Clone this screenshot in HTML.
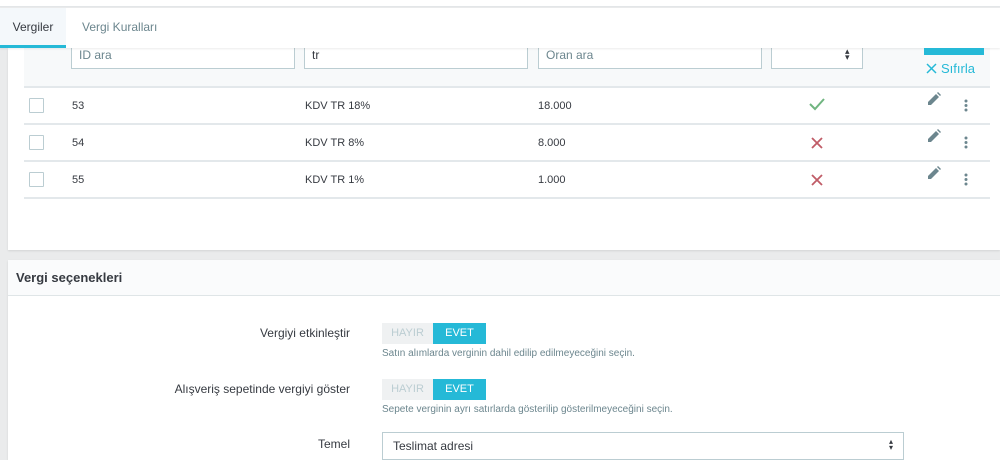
<!DOCTYPE html><html><head><style>
*{box-sizing:border-box;margin:0;padding:0}
body{width:1000px;height:460px;overflow:hidden;background:#eaebec;font-family:"Liberation Sans",sans-serif;color:#363a41;position:relative}
.abs{position:absolute}
.top{left:0;top:0;width:1000px;height:7px;background:#fff;border-bottom:1px solid #e3e6e8}
.tabs{left:0;top:8px;width:1000px;height:40px;background:#fff;box-shadow:0 1px 2px rgba(0,0,0,.08);z-index:2}
.tab{position:absolute;top:0;height:40px;line-height:38px;font-size:12px;color:#6c868e}
.card1{left:8px;top:48px;width:992px;height:202px;background:#fff;box-shadow:0 1px 2px rgba(0,0,0,.1)}
.filter{left:24px;top:48px;width:966px;height:40px;background:#f7f9fa;border-bottom:2px solid #e3e8eb}
.inp{position:absolute;top:48px;height:21px;border:1px solid #bbcdd2;border-top:none;background:#fff;font-size:12px;color:#6c868e;padding:0 7px;line-height:12px}
.row{left:24px;width:966px;height:37px;border-bottom:2px solid #e3e8eb;font-size:11px;color:#363a41}
.row span{position:absolute;top:12px}
.cb{position:absolute;left:5px;top:10px;width:15px;height:15px;border:1px solid #bbcdd2;border-radius:1px}
.card2{left:8px;top:260px;width:992px;height:200px;background:#fff;box-shadow:0 1px 2px rgba(0,0,0,.1)}
.hdr{left:8px;top:260px;width:992px;height:36px;background:#fafbfc;border-bottom:1px solid #dfe5e7;font-size:13px;font-weight:bold;color:#363a41;padding:11px 8px;line-height:14px}
.lbl{position:absolute;right:650px;font-size:12px;color:#363a41;text-align:right}
.sw{position:absolute;left:382px;width:104px;height:21px;font-size:11px}
.sw .n{position:absolute;left:0;top:0;width:51px;height:21px;background:#eff1f2;color:#bbcdd2;text-align:center;line-height:21px}
.sw .y{position:absolute;left:51px;top:0;width:53px;height:21px;background:#25b9d7;color:#fff;text-align:center;line-height:21px}
.help{position:absolute;left:382px;font-size:10px;color:#6c868e}
</style></head><body>
<div class="abs top"></div>
<div class="abs tabs">
<div class="tab" style="left:0;width:66px;background:#f4f8fb;color:#363a41;text-align:center;border-bottom:3px solid #25b9d7">Vergiler</div>
<div class="tab" style="left:82px">Vergi Kuralları</div>
</div>
<div class="abs card1"></div>
<div class="abs filter"></div>
<div class="inp" style="left:71px;width:224px;top:48px">&nbsp;</div>
<div class="abs" style="left:79px;top:48px;font-size:12px;color:#6c868e;z-index:3">ID ara</div>
<div class="inp" style="left:304px;width:224px"></div>
<div class="abs" style="left:312px;top:48px;font-size:12px;color:#363a41;z-index:3">tr</div>
<div class="inp" style="left:538px;width:224px"></div>
<div class="abs" style="left:546px;top:48px;font-size:12px;color:#6c868e;z-index:3">Oran ara</div>
<div class="inp" style="left:771px;width:92px"></div>
<div class="abs" style="left:845px;top:48px;font-size:9px;color:#363a41;z-index:3;line-height:6px">▴<br>▾</div>
<div class="abs" style="left:924px;top:48px;width:60px;height:7px;background:#25b9d7;z-index:3"></div>
<svg class="abs" style="left:926px;top:63px" width="11" height="11" viewBox="0 0 11 11"><path d="M1 1L10 10M10 1L1 10" stroke="#25b9d7" stroke-width="1.5"/></svg>
<div class="abs" style="left:941px;top:61px;font-size:13px;color:#25b9d7">Sıfırla</div>

<div class="abs row" style="top:88px"><div class="cb"></div><span style="left:48px">53</span><span style="left:281px">KDV TR 18%</span><span style="left:514px">18.000</span></div>
<div class="abs row" style="top:125px"><div class="cb"></div><span style="left:48px">54</span><span style="left:281px">KDV TR 8%</span><span style="left:514px">8.000</span></div>
<div class="abs row" style="top:162px"><div class="cb"></div><span style="left:48px">55</span><span style="left:281px">KDV TR 1%</span><span style="left:514px">1.000</span></div>
<svg class="abs" style="left:800px;top:90px" width="40" height="100" viewBox="0 0 40 100">
<path d="M10 14L15 19L24 9" stroke="#70b580" stroke-width="2" fill="none"/>
<path d="M12 48L22 58M22 48L12 58" stroke="#c05c67" stroke-width="1.8"/>
<path d="M12 85L22 95M22 85L12 95" stroke="#c05c67" stroke-width="1.8"/>
</svg>
<svg class="abs" style="left:920px;top:92px" width="60" height="100" viewBox="0 0 60 100">
<g fill="#6c868e">
<g><path d="M8 13 L8 10 L16 2 L19 5 L11 13 Z"/><path d="M17 1 L18 0 L21 3 L20 4 Z"/></g>
<g transform="translate(0,37)"><path d="M8 13 L8 10 L16 2 L19 5 L11 13 Z"/><path d="M17 1 L18 0 L21 3 L20 4 Z"/></g>
<g transform="translate(0,74)"><path d="M8 13 L8 10 L16 2 L19 5 L11 13 Z"/><path d="M17 1 L18 0 L21 3 L20 4 Z"/></g>
<circle cx="46" cy="9" r="1.5"/><circle cx="46" cy="13.5" r="1.5"/><circle cx="46" cy="18" r="1.5"/>
<circle cx="46" cy="46" r="1.5"/><circle cx="46" cy="50.5" r="1.5"/><circle cx="46" cy="55" r="1.5"/>
<circle cx="46" cy="83" r="1.5"/><circle cx="46" cy="87.5" r="1.5"/><circle cx="46" cy="92" r="1.5"/>
</g></svg>

<div class="abs card2"></div>
<div class="abs hdr">Vergi seçenekleri</div>
<div class="lbl" style="top:326px">Vergiyi etkinleştir</div>
<div class="sw" style="top:323px"><div class="n">HAYIR</div><div class="y">EVET</div></div>
<div class="help" style="top:348px">Satın alımlarda verginin dahil edilip edilmeyeceğini seçin.</div>
<div class="lbl" style="top:382px">Alışveriş sepetinde vergiyi göster</div>
<div class="sw" style="top:379px"><div class="n">HAYIR</div><div class="y">EVET</div></div>
<div class="help" style="top:404px">Sepete verginin ayrı satırlarda gösterilip gösterilmeyeceğini seçin.</div>
<div class="lbl" style="top:437px">Temel</div>
<div class="abs" style="left:382px;top:432px;width:522px;height:28px;border:1px solid #bbcdd2;font-size:12px;padding:6px 10px">Teslimat adresi<span style="position:absolute;right:10px;top:6px;font-size:8px;line-height:6px">▴<br>▾</span></div>
</body></html>
